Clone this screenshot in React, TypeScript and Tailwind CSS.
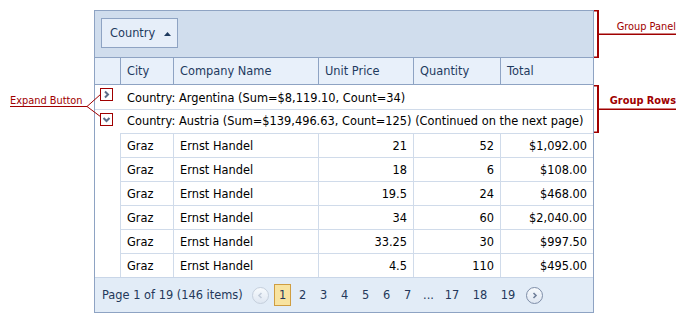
import React from "react";

const rows: [string, string, string][] = [
  ["21", "52", "$1,092.00"],
  ["18", "6", "$108.00"],
  ["19.5", "24", "$468.00"],
  ["34", "60", "$2,040.00"],
  ["33.25", "30", "$997.50"],
  ["4.5", "110", "$495.00"],
];

function ExpandBtn({ open }: { open: boolean }) {
  return (
    <div className="w-[13px] h-[13px] border border-[#a00000] bg-white flex items-center justify-center shrink-0">
      <svg width="9" height="9" viewBox="0 0 9 9">
        {open ? (
          <path d="M1.5 3 L4.5 6 L7.5 3" fill="none" stroke="#5d6d88" strokeWidth="2" />
        ) : (
          <path d="M3 1.5 L6 4.5 L3 7.5" fill="none" stroke="#5d6d88" strokeWidth="2" />
        )}
      </svg>
    </div>
  );
}

function CircleBtn({ dir, disabled }: { dir: "l" | "r"; disabled?: boolean }) {
  const c = disabled ? "#c2ccda" : "#6f7f99";
  return (
    <div
      className={`w-[17px] h-[17px] rounded-full border flex items-center justify-center shrink-0 bg-gradient-to-b from-[#f7fafd] to-[#dfe7f2] ${
        disabled ? "border-[#c5cfdc]" : "border-[#7f8ea8]"
      }`}
    >
      <svg width="7" height="7" viewBox="0 0 7 7">
        {dir === "l" ? (
          <path d="M4.5 1 L2 3.5 L4.5 6" fill="none" stroke={c} strokeWidth="1.6" />
        ) : (
          <path d="M2.5 1 L5 3.5 L2.5 6" fill="none" stroke={c} strokeWidth="1.6" />
        )}
      </svg>
    </div>
  );
}

export default function App() {
  return (
    <div className="relative w-[684px] h-[323px] bg-white overflow-hidden text-[11.4px] text-black font-['DejaVu_Sans',Verdana,sans-serif]">
      <div className="ml-[94px] mt-[10px] w-[500px] border border-[#8ea3c3]">
        {/* Group panel */}
        <div className="h-[47px] bg-[#d0dded] border-b border-[#8ea3c3] pl-[6px] pt-[7px]">
          <div className="w-[77px] h-[30px] border border-[#8ea3c3] bg-[#e6eef9] flex items-center pl-[8px] pt-[1px] text-[#1e3a5f]">
            <span>Country</span>
            <svg width="7" height="4" viewBox="0 0 7 4" className="ml-[9px]">
              <path d="M0 4 L3.5 0 L7 4 Z" fill="#1e3a5f" />
            </svg>
          </div>
        </div>
        {/* Header */}
        <div className="h-[27px] flex bg-[#e8f0fa] border-b border-[#8ea3c3] text-[#1e3a5f]">
          <div className="w-[25px]" />
          <div className="w-[53px] border-l border-[#8ea3c3] flex items-center pl-[6px] pt-[2px]">City</div>
          <div className="w-[145px] border-l border-[#8ea3c3] flex items-center pl-[6px] pt-[2px]">Company Name</div>
          <div className="w-[95px] border-l border-[#8ea3c3] flex items-center pl-[6px] pt-[2px]">Unit Price</div>
          <div className="w-[87px] border-l border-[#8ea3c3] flex items-center pl-[6px] pt-[2px]">Quantity</div>
          <div className="w-[93px] border-l border-[#8ea3c3] flex items-center pl-[6px] pt-[2px]">Total</div>
        </div>
        {/* Group rows */}
        <div className="h-[25px] flex items-start border-b border-[#d0dbea] pl-[5px]">
          <div className="mt-[3px]">
            <ExpandBtn open={false} />
          </div>
          <div className="ml-[14px] mt-[7px] leading-[13px] whitespace-nowrap">
            Country: Argentina (Sum=$8,119.10, Count=34)
          </div>
        </div>
        <div className="h-[23px] flex items-start pl-[5px]">
          <div className="mt-[3px]">
            <ExpandBtn open={true} />
          </div>
          <div className="ml-[14px] mt-[5px] leading-[13px] whitespace-nowrap">
            Country: Austria (Sum=$139,496.63, Count=125) (Continued on the next page)
          </div>
        </div>
        {/* Data rows */}
        {rows.map((r, i) => (
          <div key={i} className="h-[24px] flex">
            <div className="w-[25px]" />
            <div className="w-[53px] border-l border-t border-[#d0dbea] flex items-center pl-[6px] pt-[2px]">Graz</div>
            <div className="w-[145px] border-l border-t border-[#d0dbea] flex items-center pl-[6px] pt-[2px]">Ernst Handel</div>
            <div className="w-[95px] border-l border-t border-[#d0dbea] flex items-center justify-end pr-[6px] pt-[2px]">{r[0]}</div>
            <div className="w-[87px] border-l border-t border-[#d0dbea] flex items-center justify-end pr-[6px] pt-[2px]">{r[1]}</div>
            <div className="w-[93px] border-l border-t border-[#d0dbea] flex items-center justify-end pr-[6px] pt-[2px]">{r[2]}</div>
          </div>
        ))}
        {/* Pager */}
        <div className="h-[35px] bg-[#e2ecf7] border-t border-[#c9d6e8] flex items-center pl-[7px] text-[#24385a]">
          <span className="w-[150px] whitespace-nowrap pt-[1px]">Page 1 of 19 (146 items)</span>
          <CircleBtn dir="l" disabled />
          <div className="ml-[5px] w-[17px] h-[22px] bg-[#f8e3a0] border border-[#cf9d41] flex items-center justify-center pt-[1px]">1</div>
          <div className="ml-[3px] w-[17px] text-center pt-[1px]">2</div>
          <div className="ml-[4px] w-[17px] text-center pt-[1px]">3</div>
          <div className="ml-[4px] w-[17px] text-center pt-[1px]">4</div>
          <div className="ml-[4px] w-[17px] text-center pt-[1px]">5</div>
          <div className="ml-[4px] w-[17px] text-center pt-[1px]">6</div>
          <div className="ml-[4px] w-[17px] text-center pt-[1px]">7</div>
          <div className="ml-[4px] w-[17px] text-center pt-[1px]">...</div>
          <div className="ml-[3px] w-[24px] text-center pt-[1px]">17</div>
          <div className="ml-[4px] w-[24px] text-center pt-[1px]">18</div>
          <div className="ml-[4px] w-[24px] text-center pt-[1px]">19</div>
          <div className="ml-[6px]">
            <CircleBtn dir="r" />
          </div>
        </div>
      </div>

      {/* Annotations */}
      <svg className="absolute left-0 top-0 pointer-events-none" width="684" height="323" viewBox="0 0 684 323">
        <g stroke="#a00000" fill="none" strokeWidth="1">
          <line x1="10" y1="106.5" x2="87" y2="106.5" />
          <line x1="87" y1="106.5" x2="101" y2="94" />
          <line x1="87" y1="106.5" x2="101" y2="117" />
        </g>
        <g fill="#a00000">
          <rect x="597" y="10" width="2" height="48" />
          <rect x="594" y="10" width="5" height="1.5" />
          <rect x="594" y="56.5" width="5" height="1.5" />
          <rect x="598" y="33.5" width="78" height="1.5" />
          <rect x="597" y="85" width="2" height="48" />
          <rect x="594" y="85" width="5" height="1.5" />
          <rect x="594" y="131.5" width="5" height="1.5" />
          <rect x="598" y="108.5" width="78" height="1.5" />
        </g>
      </svg>
      <span className="absolute left-[10px] top-[96px] text-[9.8px] leading-[10px] text-[#a00000] whitespace-nowrap">
        Expand Button
      </span>
      <span className="absolute right-[8px] top-[22px] text-[9.8px] leading-[10px] text-[#a00000] whitespace-nowrap">
        Group Panel
      </span>
      <span className="absolute right-[8px] top-[96px] text-[9.8px] leading-[10px] font-bold text-[#a00000] whitespace-nowrap">
        Group Rows
      </span>
    </div>
  );
}
